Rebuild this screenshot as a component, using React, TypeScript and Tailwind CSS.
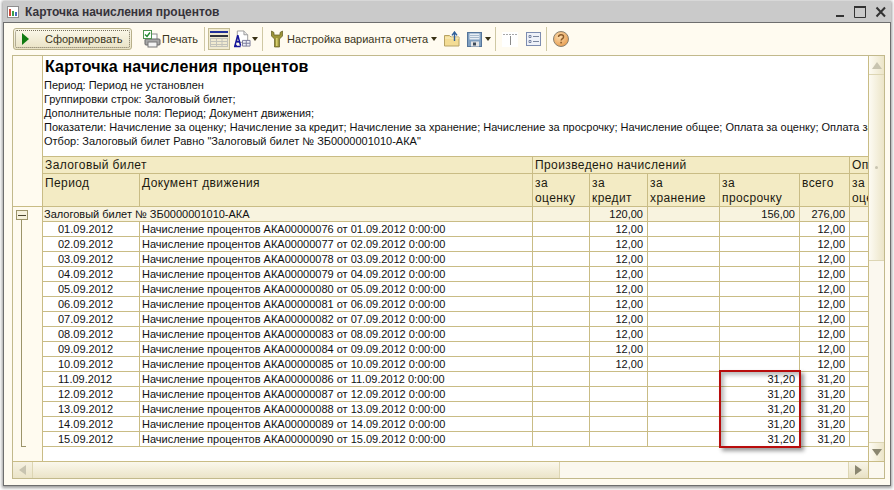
const rows = [
  { d: "01", n: "76", credit: true },
  { d: "02", n: "77", credit: true },
  { d: "03", n: "78", credit: true },
  { d: "04", n: "79", credit: true },
  { d: "05", n: "80", credit: true },
  { d: "06", n: "81", credit: true },
  { d: "07", n: "82", credit: true },
  { d: "08", n: "83", credit: true },
  { d: "09", n: "84", credit: true },
  { d: "10", n: "85", credit: true },
  { d: "11", n: "86", credit: false },
  { d: "12", n: "87", credit: false },
  { d: "13", n: "88", credit: false },
  { d: "14", n: "89", credit: false },
  { d: "15", n: "90", credit: false },
];

const hdr = "border-r border-b border-[#c9bc85] bg-[#f3ebc4] align-top pl-[2px] pr-0 pt-px font-normal text-left text-[12px] tracking-[0.4px] leading-[15px] text-[#1c1a10] overflow-hidden whitespace-nowrap";
const hdr2 = hdr + " !pt-[2px]";
const cell = "border-r border-b border-[#c9bc85] h-[15px] p-0 pl-[2px] pr-[4px] text-[11px] leading-[14px] text-[#111] overflow-hidden whitespace-nowrap";
const num = cell + " text-right";
const grp = "border-r border-b border-[#c9bc85] bg-[#f8f3df] h-[15px] p-0 pl-[2px] pr-[4px] text-[11px] leading-[14px] text-[#111] overflow-hidden whitespace-nowrap";

function Caret() {
  return (
    <svg width="6" height="4" viewBox="0 0 6 4" className="shrink-0">
      <path d="M0 0h6L3 4z" fill="#3a3216" />
    </svg>
  );
}

function Sep({ className }: { className: string }) {
  return <div className={"w-[2px] h-[24px] shrink-0 border-l border-[#cfc8a4] border-r-white " + className} />;
}

function PrintIcon() {
  return (
    <svg width="18" height="18" viewBox="0 0 18 18" className="shrink-0">
      <rect x="5" y="4" width="9" height="6" fill="#fff" stroke="#8a8a8a" />
      <rect x="2" y="9" width="15" height="6" rx="1" fill="#a8a8a8" stroke="#666" />
      <rect x="5" y="12" width="9" height="5" fill="#f4f4f4" stroke="#777" />
      <rect x=".5" y=".5" width="8" height="8" fill="#fff" stroke="#4f944f" />
      <path d="M2 4.5l2 2 3-4" fill="none" stroke="#1f8a2b" strokeWidth="1.4" />
    </svg>
  );
}

function TableIcon() {
  return (
    <svg width="18" height="16" viewBox="0 0 18 16">
      <rect x="0" y="0" width="18" height="2" fill="#20309a" />
      <rect x="0" y="4" width="18" height="2" fill="#30343e" />
      <path d="M0 7.5h18M0 10.5h18M0 13.5h18M0 15.5h18M.5 7v9M6.5 7v9M12 7v9M17.5 7v9" stroke="#c2c2ba" fill="none" />
    </svg>
  );
}

function FontIcon() {
  return (
    <svg width="17" height="18" viewBox="0 0 18 18" className="shrink-0">
      <path d="M3.5.5h7l4 4v8h-11z" fill="#fff" stroke="#9a9a9a" />
      <path d="M10.5.5v4h4" fill="#e6e6e6" stroke="#9a9a9a" />
      <path d="M0 17h7M4 5L1 16h2M4 5l3 11M2.5 12h4" stroke="#14149a" strokeWidth="1.6" fill="none" />
      <path d="M9 10.5h8v6H9zM9 13.5h8M13 10.5v6" stroke="#7a7a9a" fill="#eef0f6" />
    </svg>
  );
}

function WrenchIcon() {
  return (
    <svg width="12" height="18" viewBox="0 0 12 18" className="shrink-0">
      <path d="M.5 1v5l3 3v8h5V9l3-3V1L9 2.5V5H3V2.5z" fill="#9d953a" stroke="#5f5a1e" strokeWidth=".7" />
      <rect x="5" y="8" width="1.6" height="8" fill="#d8d070" />
    </svg>
  );
}

function FolderIcon() {
  return (
    <svg width="16" height="16" viewBox="0 0 16 16" className="shrink-0">
      <path d="M.5 4.5h5l1.5 1.5h8v9H.5z" fill="#f3dc94" stroke="#b7a364" />
      <path d="M1 7h14" stroke="#fbf0c4" />
      <path d="M10.5 10V2M8 4.3L10.5 1 13 4.3" stroke="#2f5f9a" strokeWidth="1.4" fill="none" />
    </svg>
  );
}

function SaveIcon() {
  return (
    <svg width="15" height="15" viewBox="0 0 15 15" className="shrink-0">
      <rect x=".5" y=".5" width="14" height="14" fill="#7f9fc0" stroke="#55759a" />
      <rect x="2.5" y="1.5" width="10" height="6" fill="#e8eef4" />
      <path d="M3 3.5h9M3 5.5h9" stroke="#a8bacc" />
      <rect x="4" y="9.5" width="8" height="5" fill="#e4e4e4" />
      <rect x="6" y="10.5" width="3" height="3" fill="#3c4a5a" />
    </svg>
  );
}

function ColumnsIcon() {
  return (
    <svg width="16" height="15" viewBox="0 0 16 15" className="shrink-0">
      <rect width="16" height="15" fill="#fff" />
      <path d="M1 2.5h14" stroke="#a8a8a8" strokeDasharray="2 1" />
      <path d="M8.5 4v9" stroke="#8a8a8a" />
    </svg>
  );
}

function ListIcon() {
  return (
    <svg width="15" height="14" viewBox="0 0 15 14" className="shrink-0">
      <rect x=".5" y=".5" width="14" height="13" fill="#eef1f8" stroke="#7d8cb0" />
      <path d="M3 3.5h2v2H3zM3 8.5h2v2H3z" fill="#fff" stroke="#5a6a90" strokeWidth=".8" />
      <path d="M7 4.5h6M7 9.5h6" stroke="#7a869e" />
    </svg>
  );
}

function HelpIcon() {
  return (
    <svg width="16" height="16" viewBox="0 0 16 16" className="shrink-0">
      <defs>
        <radialGradient id="hlp" cx="0.4" cy="0.35" r="0.7">
          <stop offset="0" stopColor="#fbdcae" />
          <stop offset="1" stopColor="#e79c4e" />
        </radialGradient>
      </defs>
      <circle cx="8" cy="8" r="7.5" fill="url(#hlp)" stroke="#8a8272" />
      <path d="M5.5 6C5.6 4.4 6.8 3.8 8 3.8c1.5 0 2.6.9 2.6 2.1 0 1.7-2.4 1.8-2.5 3.6" fill="none" stroke="#8a5a2a" strokeWidth="1.4" />
      <rect x="7.3" y="10.8" width="1.6" height="1.6" fill="#8a5a2a" />
    </svg>
  );
}

function ChartIcon() {
  return (
    <svg width="12" height="12" viewBox="0 0 12 12" className="shrink-0">
      <rect x=".5" y=".5" width="11" height="11" fill="#fff" stroke="#8e8e8e" />
      <rect x="2" y="3" width="2" height="7" fill="#d04a3a" />
      <rect x="5" y="5" width="2" height="5" fill="#3aa04a" />
      <rect x="8" y="6" width="2" height="4" fill="#4a6ac0" />
    </svg>
  );
}

function Tri({ dir, color }: { dir: "up" | "down" | "left" | "right"; color: string }) {
  const d = { up: "M0 7L5 0l5 7z", down: "M0 0h10L5 7z", left: "M7 0v10L0 5z", right: "M0 0v10l7-5z" }[dir];
  const vertical = dir === "up" || dir === "down";
  return (
    <svg width={vertical ? 10 : 7} height={vertical ? 7 : 10} viewBox={vertical ? "0 0 10 7" : "0 0 7 10"}>
      <path d={d} fill={color} />
    </svg>
  );
}

function ReportHead() {
  return (
    <div className="h-[101px] border-b border-[#c9bc85] pl-px overflow-hidden whitespace-nowrap text-[11px] leading-[14px] text-[#111]">
      <div className="h-[22px] pl-px text-[16px] tracking-[0.15px] leading-[21px] font-bold text-black">Карточка начисления процентов</div>
      <div>Период: Период не установлен</div>
      <div>Группировки строк: Залоговый билет;</div>
      <div>Дополнительные поля: Период; Документ движения;</div>
      <div>Показатели: Начисление за оценку; Начисление за кредит; Начисление за хранение; Начисление за просрочку; Начисление общее; Оплата за оценку; Оплата за кредит</div>
      <div>Отбор: Залоговый билет Равно "Залоговый билет № ЗБ0000001010-АКА"</div>
    </div>
  );
}

function ReportTable() {
  return (
    <table className="table-fixed border-separate border-spacing-0 w-[825px]">
      <colgroup>
        <col className="w-[97px]" />
        <col className="w-[393px]" />
        <col className="w-[57px]" />
        <col className="w-[58px]" />
        <col className="w-[72px]" />
        <col className="w-[80px]" />
        <col className="w-[50px]" />
        <col className="w-[18px]" />
      </colgroup>
      <thead>
        <tr className="h-[17px]">
          <th colSpan={2} className={hdr}>Залоговый билет</th>
          <th colSpan={5} className={hdr}>Произведено начислений</th>
          <th className={hdr + " !border-r-0"}>Оплачено</th>
        </tr>
        <tr className="h-[33px]">
          <th className={hdr2}>Период</th>
          <th className={hdr2}>Документ движения</th>
          <th className={hdr2}>за<br />оценку</th>
          <th className={hdr2}>за<br />кредит</th>
          <th className={hdr2}>за<br />хранение</th>
          <th className={hdr2}>за<br />просрочку</th>
          <th className={hdr2}>всего</th>
          <th className={hdr2 + " !border-r-0"}>за<br />оценку</th>
        </tr>
      </thead>
      <tbody>
        <tr>
          <td colSpan={2} className={grp + " !pl-px"}>Залоговый билет № ЗБ0000001010-АКА</td>
          <td className={grp}></td>
          <td className={grp + " text-right"}>120,00</td>
          <td className={grp}></td>
          <td className={grp + " text-right"}>156,00</td>
          <td className={grp + " text-right"}>276,00</td>
          <td className={grp + " !border-r-0"}></td>
        </tr>
        {rows.map((r) => (
          <tr key={r.d}>
            <td className={cell + " !pl-[15px]"}>{r.d}.09.2012</td>
            <td className={cell}>{`Начисление процентов АКА000000${r.n} от ${r.d}.09.2012 0:00:00`}</td>
            <td className={cell}></td>
            <td className={num}>{r.credit ? "12,00" : ""}</td>
            <td className={cell}></td>
            <td className={num}>{r.credit ? "" : "31,20"}</td>
            <td className={num}>{r.credit ? "12,00" : "31,20"}</td>
            <td className={cell + " !border-r-0"}></td>
          </tr>
        ))}
      </tbody>
    </table>
  );
}

export default function App() {
  return (
    <div className="w-[894px] h-[490px] bg-white overflow-hidden pt-px pl-[3px] font-['Liberation_Sans',Arial,sans-serif]">
      <div className="w-[888px] h-[485px] flex flex-col shadow-[0_1px_3px_1px_rgba(0,0,0,0.4)]">
        {/* title bar */}
        <div className="h-[21px] shrink-0 bg-[#cacaca] flex items-center pl-[4px] pr-[5px]">
          <ChartIcon />
          <div className="ml-[6px] text-[12px] font-bold text-[#36333a]">Карточка начисления процентов</div>
          <svg width="50" height="12" viewBox="0 0 50 12" className="ml-auto">
            <path d="M0 10h8" stroke="#333" strokeWidth="2" />
            <path d="M18.5 1.5h11v10h-11z" fill="none" stroke="#333" />
            <path d="M18 1h12" stroke="#333" strokeWidth="2" />
            <path d="M40.5 1.5l8.5 9M49 1.5l-8.5 9" stroke="#333" strokeWidth="2" />
          </svg>
        </div>

        {/* body */}
        <div className="flex-1 min-h-0 flex flex-col bg-[#fffbf0] border border-[#6e6e6e] pl-[8px] pr-[5px] pb-[6px]">
          {/* toolbar */}
          <div className="h-[32px] shrink-0 flex items-center text-[11px] text-[#3a3520]">
            <button className="ml-px w-[119px] h-[22px] rounded-[3px] border border-[#b8b08a] bg-gradient-to-b from-[#fbf8ea] to-[#e9e2c4] p-px flex">
              <span className="flex-1 rounded-[2px] border border-dotted border-[#77705a] flex items-center pl-[6px]">
                <svg width="7" height="12" viewBox="0 0 7 12" className="shrink-0">
                  <path d="M0 0l7 6-7 6z" fill="#0f7a10" />
                </svg>
                <span className="ml-[16px]">Сформировать</span>
              </span>
            </button>
            <div className="ml-[11px]"><PrintIcon /></div>
            <span className="ml-[1px]">Печать</span>
            <Sep className="ml-[6px]" />
            <div className="ml-[2px] w-[22px] h-[22px] shrink-0 flex items-center justify-center border border-[#c4bc94] bg-[#f0ead0]">
              <TableIcon />
            </div>
            <div className="ml-[4px]"><FontIcon /></div>
            <div className="ml-px"><Caret /></div>
            <Sep className="ml-[4px]" />
            <div className="ml-[7px]"><WrenchIcon /></div>
            <span className="ml-[4px]">Настройка варианта отчета</span>
            <div className="ml-[3px]"><Caret /></div>
            <div className="ml-[7px]"><FolderIcon /></div>
            <div className="ml-[7px]"><SaveIcon /></div>
            <div className="ml-[3px]"><Caret /></div>
            <Sep className="ml-[4px]" />
            <div className="ml-[5px]"><ColumnsIcon /></div>
            <div className="ml-[8px]"><ListIcon /></div>
            <Sep className="ml-[5px]" />
            <div className="ml-[5px]"><HelpIcon /></div>
          </div>

          {/* report frame */}
          <div className="flex-1 min-h-0 flex flex-col border border-[#c2b98c] bg-white">
            <div className="h-[405px] shrink-0 flex">
              {/* grouping gutter */}
              <div className="w-[30px] shrink-0 bg-[#fffbf0] border-r border-[#c9bc85]">
                <div className="h-[151px] border-b border-[#c9bc85]" />
                <div className="ml-[3px] mt-[3px] w-[12px] h-[10px] border border-[#9c946a] bg-[#f6f1dc] flex items-center justify-center">
                  <div className="w-[8px] h-px bg-[#4a4530]" />
                </div>
                <div className="ml-[8px] w-[5px] h-[227px] border-l border-b border-[#9c946a]" />
              </div>
              {/* report */}
              <div className="relative w-[825px] shrink-0">
                <div className="overflow-hidden h-full">
                  <ReportHead />
                  <ReportTable />
                </div>
                {/* highlight */}
                <div className="absolute left-[676px] top-[314px] w-[82px] h-[78px] border-2 border-[#b80c0c] shadow-[3px_3px_4px_rgba(0,0,0,0.4),inset_3px_3px_4px_rgba(0,0,0,0.28)]" />
              </div>
              {/* vertical scrollbar */}
              <div className="w-[16px] shrink-0 flex flex-col bg-[#fbf8ef] border-l border-[#c9bc85]">
                <div className="h-[19px] shrink-0 bg-gradient-to-r from-[#fdfbf3] to-[#ece5c8] border-b border-[#ddd6b4] flex items-center justify-center">
                  <Tri dir="up" color="#c8c4b0" />
                </div>
                <div className="h-[186px] shrink-0 bg-gradient-to-r from-[#fdfbf3] to-[#ece5c8] border-b border-[#ddd6b4] flex items-center justify-center">
                  <div className="w-[3px] h-[3px] rounded-full bg-[#c8c4b0]" />
                </div>
                <div className="flex-1" />
                <div className="h-[19px] shrink-0 bg-gradient-to-r from-[#fdfbf3] to-[#ece5c8] border-t border-[#ddd6b4] flex items-center justify-center">
                  <Tri dir="down" color="#8a8670" />
                </div>
              </div>
            </div>
            {/* horizontal scrollbar */}
            <div className="h-[17px] shrink-0 flex border-t border-[#c9bc85] bg-[#fbf8ef]">
              <div className="w-[20px] shrink-0 bg-gradient-to-b from-[#f6f2e2] to-[#ebe4c8] border-r border-[#ddd6b4] flex items-center justify-center">
                <Tri dir="left" color="#c8c4b0" />
              </div>
              <div className="w-[527px] shrink-0 bg-gradient-to-b from-[#fbf8ec] to-[#ebe4c8] border-r border-[#ddd6b4]" />
              <div className="flex-1" />
              <div className="w-[20px] shrink-0 bg-gradient-to-b from-[#f8f5e8] to-[#e8e1c4] border-l border-[#ddd6b4] flex items-center justify-center">
                <Tri dir="right" color="#8a8670" />
              </div>
              <div className="w-[16px] shrink-0 border-l border-[#c9bc85]" />
            </div>
          </div>
        </div>
      </div>
    </div>
  );
}
